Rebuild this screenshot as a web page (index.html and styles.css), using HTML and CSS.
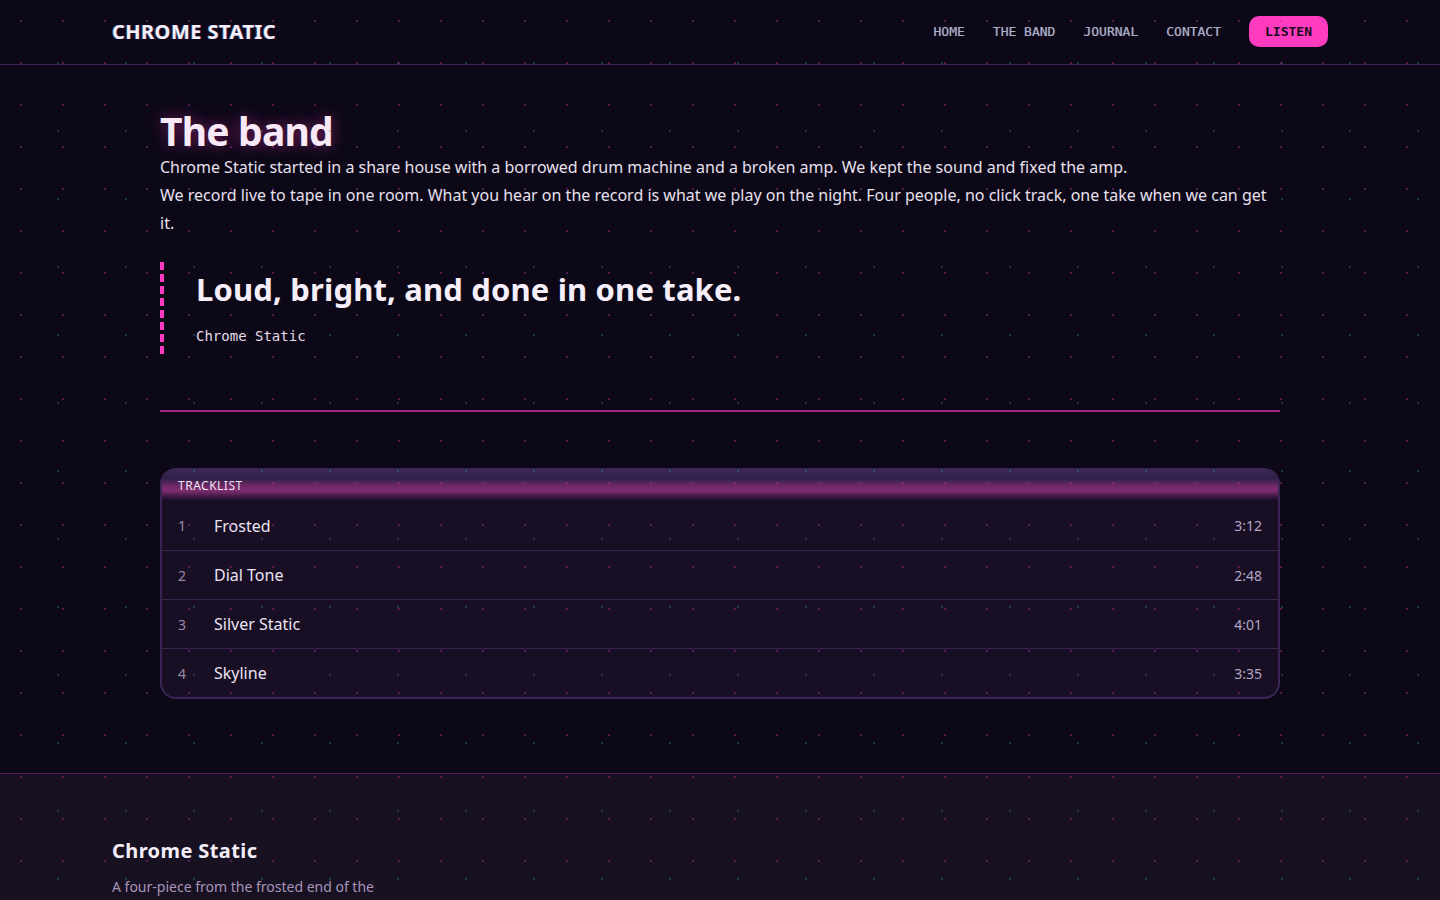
FILE: index.html
```html
<!DOCTYPE html>
<html lang="en">
<head>
    <meta charset="UTF-8">
    <meta name="viewport" content="width=device-width, initial-scale=1.0">
    <title>The band | Chrome Static</title>
    <link rel="stylesheet" href="styles.css">
</head>
<body>
    <header class="site-header">
        <div class="header-inner">
            <a class="logo" href="#">CHROME STATIC</a>
            <nav class="nav">
                <a href="#">HOME</a>
                <a href="#">THE BAND</a>
                <a href="#">JOURNAL</a>
                <a href="#">CONTACT</a>
                <a class="listen-btn" href="#">LISTEN</a>
            </nav>
        </div>
    </header>

    <main class="page">
        <h1 class="page-title">The band</h1>
        <p>Chrome Static started in a share house with a borrowed drum machine and a broken amp. We kept the sound and fixed the amp.</p>
        <p>We record live to tape in one room. What you hear on the record is what we play on the night. Four people, no click track, one take when we can get it.</p>

        <blockquote class="pull-quote">
            <p>Loud, bright, and done in one take.</p>
            <cite>Chrome Static</cite>
        </blockquote>

        <hr class="divider">

        <section class="tracklist">
            <div class="tracklist-head">TRACKLIST</div>
            <ol class="tracks">
                <li><span class="num">1</span><span class="title">Frosted</span><span class="time">3:12</span></li>
                <li><span class="num">2</span><span class="title">Dial Tone</span><span class="time">2:48</span></li>
                <li><span class="num">3</span><span class="title">Silver Static</span><span class="time">4:01</span></li>
                <li><span class="num">4</span><span class="title">Skyline</span><span class="time">3:35</span></li>
            </ol>
        </section>
    </main>

    <footer class="site-footer">
        <div class="footer-inner">
            <div class="footer-col">
                <h2>Chrome Static</h2>
                <p>A four-piece from the frosted end of the city. Loud records, bright shows.</p>
            </div>
        </div>
    </footer>
</body>
</html>
```

FILE: styles.css
```css
body {
    margin: 0;
    background-color: #0c0817;
    color: #ece4f2;
    font-family: 'Noto Sans', sans-serif;
}

/* dot grid laid over everything */
body::before {
    content: "";
    position: fixed;
    inset: 0;
    pointer-events: none;
    z-index: 10;
    background-image:
        radial-gradient(circle, rgba(180, 40, 160, 0.45) 1px, transparent 1.5px),
        radial-gradient(circle, rgba(40, 150, 140, 0.35) 1px, transparent 1.5px);
    background-size: 42px 42px, 68px 68px;
    background-position: 0 0, 24px 29px;
}

a {
    text-decoration: none;
}

.site-header {
    border-bottom: 1px solid #3d2155;
}

.header-inner {
    max-width: 1216px;
    height: 64px;
    box-sizing: border-box;
    padding-bottom: 2px;
    margin: 0 auto;
    display: flex;
    align-items: center;
    justify-content: space-between;
}

.logo {
    color: #f4f0fa;
    font-weight: 700;
    font-size: 20px;
    letter-spacing: 0.45px;
    text-shadow: -1px 0 rgba(80, 200, 255, 0.35), 1px 0 rgba(255, 60, 190, 0.3);
}

.nav {
    display: flex;
    align-items: center;
    gap: 28px;
}

.nav a {
    font-family: 'DejaVu Sans Mono', monospace;
    font-size: 13px;
    color: #a7b0c9;
    text-shadow: -0.5px 0 rgba(255, 150, 90, 0.35), 0.5px 0 rgba(90, 160, 255, 0.35);
}

.nav .listen-btn {
    background-color: #ff3cbf;
    color: #1a0a20;
    font-weight: 700;
    padding: 7px 16px;
    border-radius: 10px;
    line-height: 17px;
    text-shadow: none;
}

.page {
    max-width: 1120px;
    margin: 0 auto;
    padding: 44px 0 74px;
}

.page-title {
    margin: 0;
    font-size: 39px;
    line-height: 44px;
    font-weight: 700;
    color: #f7e9f5;
    letter-spacing: -0.8px;
    text-shadow: 0 0 16px rgba(255, 60, 190, 0.45);
}

.page > p {
    margin: 0;
    font-size: 16px;
    line-height: 28px;
    color: #e8e0ee;
}

.pull-quote {
    margin: 25px 0 0;
    padding: 9px 0 7px 32px;
    border-left: 4px dashed #ff3cbf;
}

.pull-quote p {
    margin: 0 0 19px;
    font-size: 31px;
    line-height: 36px;
    font-weight: 700;
    color: #f6eef8;
    letter-spacing: 0.15px;
}

.pull-quote cite {
    display: block;
    font-style: normal;
    font-family: 'DejaVu Sans Mono', monospace;
    font-size: 14px;
    line-height: 21px;
    color: #e6dcea;
}

.divider {
    margin: 56px 0;
    border: none;
    height: 2px;
    background-color: #a1287c;
}

.tracklist {
    border: 2px solid #3b2556;
    border-radius: 16px;
    overflow: hidden;
    background-color: rgba(28, 17, 42, 0.75);
}

.tracklist-head {
    height: 30px;
    padding: 1px 16px 0;
    box-sizing: border-box;
    font-size: 12px;
    line-height: 30px;
    letter-spacing: 0.5px;
    color: #ece4f2;
    background: linear-gradient(to bottom, #3d2858 0%, #2e2149 28%, #6a2762 50%, #822d72 68%, #4a1c4a 85%, #1c1129 100%);
}

.tracks {
    list-style: none;
    margin: 0;
    padding: 0;
}

.tracks li {
    display: flex;
    align-items: center;
    height: 48px;
    padding: 0 16px;
    border-top: 1px solid #3a2550;
}

.tracks li:first-child {
    border-top: none;
    height: 50px;
    padding-top: 1px;
    box-sizing: border-box;
}

.tracks .num {
    width: 36px;
    font-size: 14px;
    color: #9a8aa8;
}

.tracks .title {
    flex: 1;
    font-size: 16px;
    color: #ece4f2;
}

.tracks .time {
    font-size: 14px;
    color: #b4a6c4;
}

.site-footer {
    border-top: 1px solid #561c58;
    background-color: #181122;
}

.footer-inner {
    max-width: 1216px;
    margin: 0 auto;
    padding: 64px 0 48px;
}

.footer-col {
    max-width: 280px;
}

.footer-col h2 {
    margin: 0 0 12px;
    font-size: 20px;
    line-height: 26px;
    font-weight: 700;
    letter-spacing: 0.4px;
    color: #f4eef8;
}

.footer-col p {
    margin: 0;
    font-size: 14px;
    line-height: 22px;
    color: #a894b8;
}
```
